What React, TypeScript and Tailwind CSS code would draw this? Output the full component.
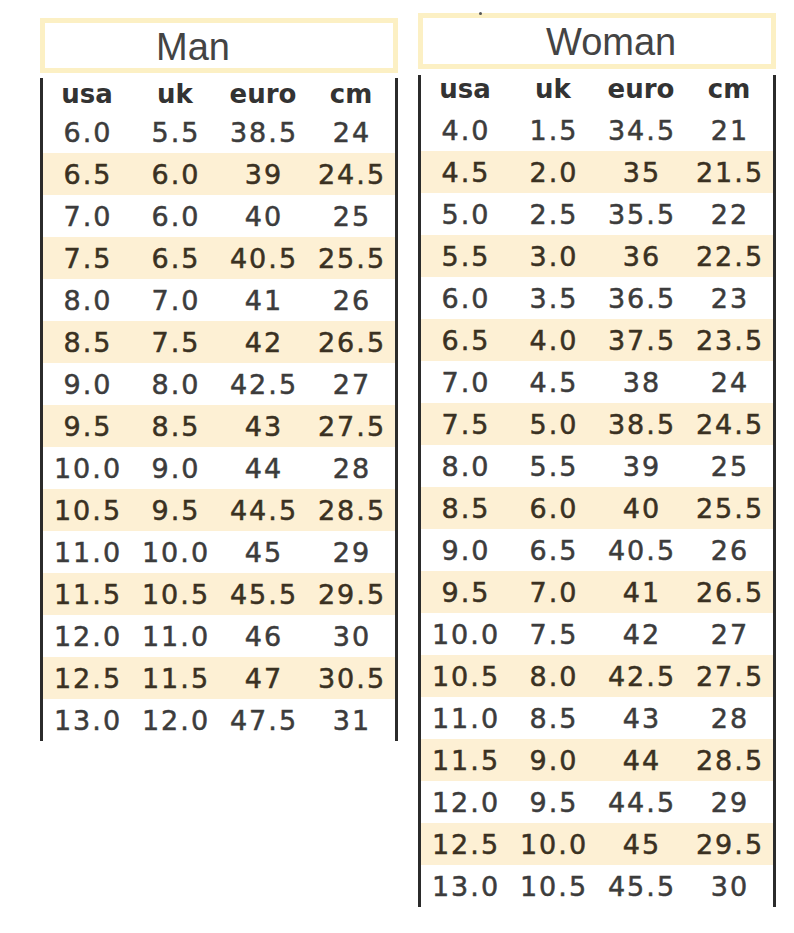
const men = [
	["6.0", "5.5", "38.5", "24"],
	["6.5", "6.0", "39", "24.5"],
	["7.0", "6.0", "40", "25"],
	["7.5", "6.5", "40.5", "25.5"],
	["8.0", "7.0", "41", "26"],
	["8.5", "7.5", "42", "26.5"],
	["9.0", "8.0", "42.5", "27"],
	["9.5", "8.5", "43", "27.5"],
	["10.0", "9.0", "44", "28"],
	["10.5", "9.5", "44.5", "28.5"],
	["11.0", "10.0", "45", "29"],
	["11.5", "10.5", "45.5", "29.5"],
	["12.0", "11.0", "46", "30"],
	["12.5", "11.5", "47", "30.5"],
	["13.0", "12.0", "47.5", "31"],
]

const women = [
	["4.0", "1.5", "34.5", "21"],
	["4.5", "2.0", "35", "21.5"],
	["5.0", "2.5", "35.5", "22"],
	["5.5", "3.0", "36", "22.5"],
	["6.0", "3.5", "36.5", "23"],
	["6.5", "4.0", "37.5", "23.5"],
	["7.0", "4.5", "38", "24"],
	["7.5", "5.0", "38.5", "24.5"],
	["8.0", "5.5", "39", "25"],
	["8.5", "6.0", "40", "25.5"],
	["9.0", "6.5", "40.5", "26"],
	["9.5", "7.0", "41", "26.5"],
	["10.0", "7.5", "42", "27"],
	["10.5", "8.0", "42.5", "27.5"],
	["11.0", "8.5", "43", "28"],
	["11.5", "9.0", "44", "28.5"],
	["12.0", "9.5", "44.5", "29"],
	["12.5", "10.0", "45", "29.5"],
	["13.0", "10.5", "45.5", "30"],
]

const headers = ["usa", "uk", "euro", "cm"]

interface SizeTableProps {
	title: string
	rows: string[][]
	boxClass: string
	tableClass: string
	headClass: string
}

function SizeTable({ title, rows, boxClass, tableClass, headClass }: SizeTableProps) {
	return (
		<div className="flex w-[358px] flex-col">
			{/* title box */}
			<div className={`flex items-center border-[5px] border-[#fcf0c4] bg-white ${boxClass}`}>
				<span
					className="pt-[2px] text-[38px] leading-none text-[#444444]"
					style={{ fontFamily: '"Liberation Sans", Arial, sans-serif' }}
				>
					{title}
				</span>
			</div>

			{/* table with the black side rules */}
			<div
				className={`flex flex-col border-x-[3px] border-[#2b2b2b] ${tableClass}`}
				style={{ fontFamily: '"DejaVu Sans", Verdana, sans-serif' }}
			>
				<div className={`grid grid-cols-4 items-start text-[26px] font-bold text-[#333333] ${headClass}`}>
					{headers.map((h) => (
						<div key={h} className="text-center leading-none">
							{h}
						</div>
					))}
				</div>
				{rows.map((row, i) => (
					<div
						key={row[0]}
						className={`grid h-[42px] grid-cols-4 items-center text-[27px] tracking-[2px] [-webkit-text-stroke:0.5px_currentColor] ${
							i % 2 === 1 ? "bg-[#fdf0d4] text-[#3a3122]" : "text-[#3c3c3c]"
						}`}
					>
						{row.map((v, j) => (
							<div key={j} className="pl-[2px] text-center leading-none">
								{v}
							</div>
						))}
					</div>
				))}
			</div>
		</div>
	)
}

export default function App() {
	return (
		<div className="relative flex h-[933px] w-[794px] items-start bg-white pl-[40px]">
			<div className="pt-[18px]">
				<SizeTable
					title="Man"
					rows={men}
					boxClass="h-[55px] pl-[111px]"
					tableClass="mt-[5px]"
					headClass="h-[33px] pt-[3px]"
				/>
			</div>
			<div className="ml-[20px] pt-[13px]">
				<SizeTable
					title="Woman"
					rows={women}
					boxClass="h-[56px] pl-[123px]"
					tableClass="mt-[6px]"
					headClass="h-[34px] pt-[1px]"
				/>
			</div>
			<div className="absolute left-[479px] top-[12px] h-[3px] w-[3px] rounded-full bg-[#555]" />
		</div>
	)
}
